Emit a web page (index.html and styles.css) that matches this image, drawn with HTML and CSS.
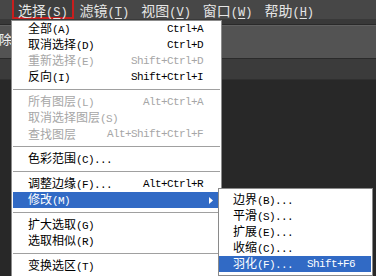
FILE: index.html
```html
<!DOCTYPE html>
<html lang="zh-CN">
<head>
<meta charset="utf-8">
<link rel="stylesheet" href="styles.css">
</head>
<body>
<div class="app">
  <div class="menubar">
    <span class="mb-item sel">选择<span class="mbm">(<u>S</u>)</span></span>
    <span class="mb-item">滤镜<span class="mbm">(<u>T</u>)</span></span>
    <span class="mb-item">视图<span class="mbm">(<u>V</u>)</span></span>
    <span class="mb-item">窗口<span class="mbm">(<u>W</u>)</span></span>
    <span class="mb-item">帮助<span class="mbm">(<u>H</u>)</span></span>
  </div>
  <div class="band"></div>
  <div class="options"><span class="opt-text">删除</span></div>
  <div class="tabs"></div>
  <div class="canvas"></div>

  <div class="menu">
    <div class="item"><span>全部<span class="m">(A)</span></span><span class="m">Ctrl+A</span></div>
    <div class="item"><span>取消选择<span class="m">(D)</span></span><span class="m">Ctrl+D</span></div>
    <div class="item dis"><span>重新选择<span class="m">(E)</span></span><span class="m">Shift+Ctrl+D</span></div>
    <div class="item"><span>反向<span class="m">(I)</span></span><span class="m">Shift+Ctrl+I</span></div>
    <div class="sep"></div>
    <div class="item dis"><span>所有图层<span class="m">(L)</span></span><span class="m">Alt+Ctrl+A</span></div>
    <div class="item dis"><span>取消选择图层<span class="m">(S)</span></span></div>
    <div class="item dis"><span>查找图层</span><span class="m">Alt+Shift+Ctrl+F</span></div>
    <div class="sep"></div>
    <div class="item"><span>色彩范围<span class="m">(C)...</span></span></div>
    <div class="sep"></div>
    <div class="item"><span>调整边缘<span class="m">(F)...</span></span><span class="m">Alt+Ctrl+R</span></div>
    <div class="item hl sub"><span>修改<span class="m">(M)</span></span><svg class="arrow" width="4" height="7" viewBox="0 0 4 7"><path d="M0 0L4 3.5L0 7Z" fill="#fff"/></svg></div>
    <div class="sep"></div>
    <div class="item"><span>扩大选取<span class="m">(G)</span></span></div>
    <div class="item"><span>选取相似<span class="m">(R)</span></span></div>
    <div class="sep"></div>
    <div class="item"><span>变换选区<span class="m">(T)</span></span></div>
  </div>

  <div class="submenu">
    <div class="sitem"><span>边界<span class="m">(B)...</span></span></div>
    <div class="sitem"><span>平滑<span class="m">(S)...</span></span></div>
    <div class="sitem"><span>扩展<span class="m">(E)...</span></span></div>
    <div class="sitem"><span>收缩<span class="m">(C)...</span></span></div>
    <div class="sitem hl"><span>羽化<span class="m">(F)...</span></span><span class="m">Shift+F6</span></div>
  </div>
</div>
</body>
</html>
```

FILE: styles.css
```css
html, body {
  margin: 0;
  padding: 0;
  background: #282828;
}
.app {
  position: relative;
  width: 376px;
  height: 276px;
  overflow: hidden;
  display: flex;
  flex-direction: column;
  font-family: "Noto Sans CJK SC", sans-serif;
}
.menubar {
  height: 19px;
  background: #474747;
  display: flex;
  padding-left: 12px;
  flex: none;
}
.mb-item {
  padding: 0 6px;
  line-height: 20px;
  font-size: 14px;
  color: #e6e6e6;
  white-space: nowrap;
}
.mb-item.sel {
  background: #3e3e3e;
  box-shadow: inset 2px 0 #c81e1e, inset -2px 0 #c81e1e, inset 0 -2px #c81e1e;
}
.mbm {
  font-family: "Liberation Mono", monospace;
  font-size: 12px;
}
.mbm u {
  text-underline-offset: 2px;
}
.band {
  height: 5px;
  background: #393939;
  border-bottom: 1px solid #2a2a2a;
  flex: none;
}
.options {
  height: 32px;
  background: #535353;
  border-top: 1px solid #616161;
  border-bottom: 1px solid #2a2a2a;
  flex: none;
  padding-top: 5px;
  box-sizing: border-box;
  height: 34px;
}
.opt-text {
  display: block;
  margin-left: -14px;
  font-size: 13px;
  line-height: 16px;
  color: #f0f0f0;
}
.tabs {
  height: 20px;
  background: #3b3b3b;
  border-bottom: 1px solid #303030;
  flex: none;
}
.canvas {
  flex: 1;
  background: #282828;
}

/* dropdown */
.menu {
  position: absolute;
  left: 11px;
  top: 20px;
  width: 211px;
  box-sizing: border-box;
  background: #fff;
  border: 1px solid #8c8c8c;
  padding: 0 1px 2px;
  font-size: 12px;
}
.item, .sitem {
  display: flex;
  justify-content: space-between;
  align-items: center;
  height: 16px;
  line-height: 16px;
  padding: 0 17px 0 15px;
  color: #000;
  white-space: nowrap;
}
.item.dis {
  color: #a6a6a6;
}
.item.hl, .sitem.hl {
  background: #316ac5;
  color: #fff;
}
.item.sub {
  padding-right: 7px;
}
.m {
  font-family: "Liberation Mono", monospace;
  font-size: 11px;
  letter-spacing: -0.6px;
}
.sep {
  height: 1px;
  margin: 4px 0;
  background: #a0a0a0;
}
.submenu {
  position: absolute;
  left: 218px;
  top: 188px;
  width: 155px;
  box-sizing: border-box;
  background: #fff;
  border: 1px solid #8a8a8a;
  padding: 3px 1px 3px 0;
  font-size: 12px;
}
.sitem {
  padding: 0 16px 0 14px;
}
```
